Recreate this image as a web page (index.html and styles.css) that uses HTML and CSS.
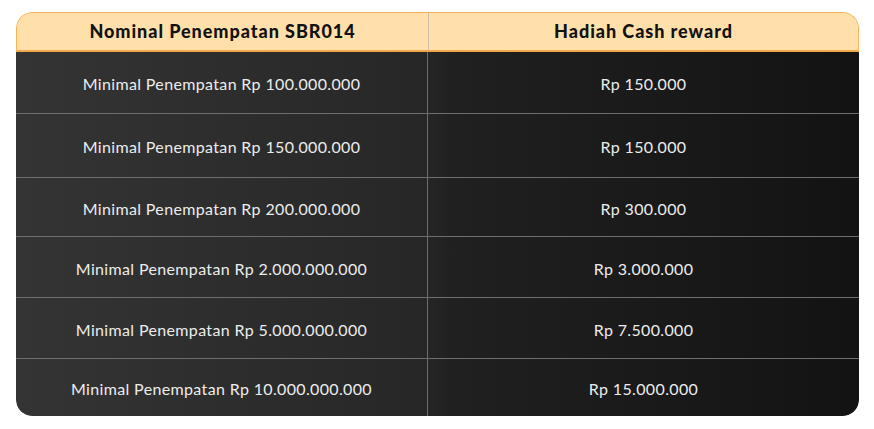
FILE: index.html
```html
<!DOCTYPE html>
<html lang="id">
<head>
<meta charset="utf-8">
<title>SBR014</title>
<link rel="stylesheet" href="styles.css">
</head>
<body>
<div class="table">
  <div class="head">
    <div class="hcell">Nominal Penempatan SBR014</div>
    <div class="hcell">Hadiah Cash reward</div>
  </div>
  <div class="body">
    <div class="row r1"><div class="cell">Minimal Penempatan Rp 100.000.000</div><div class="cell">Rp 150.000</div></div>
    <div class="row r2"><div class="cell">Minimal Penempatan Rp 150.000.000</div><div class="cell">Rp 150.000</div></div>
    <div class="row r3"><div class="cell">Minimal Penempatan Rp 200.000.000</div><div class="cell">Rp 300.000</div></div>
    <div class="row r4"><div class="cell">Minimal Penempatan Rp 2.000.000.000</div><div class="cell">Rp 3.000.000</div></div>
    <div class="row r5"><div class="cell">Minimal Penempatan Rp 5.000.000.000</div><div class="cell">Rp 7.500.000</div></div>
    <div class="row r6"><div class="cell">Minimal Penempatan Rp 10.000.000.000</div><div class="cell">Rp 15.000.000</div></div>
  </div>
</div>
</body>
</html>
```
FILE: styles.css
```css
* { box-sizing: border-box; }
html, body { margin: 0; padding: 0; background: #ffffff; }
body {
  padding: 12px 15px 0 16px;
  font-family: "Lato", "Liberation Sans", sans-serif;
}
.table {
  width: 843px;
  border-radius: 16px;
  overflow: hidden;
}
.head {
  display: grid;
  grid-template-columns: 412px 1fr;
  height: 40px;
  background: #ffe0aa;
  border: 1px solid #f6b55a;
  border-bottom: 2px solid #f2a84a;
  border-radius: 16px 16px 0 0;
}
.hcell {
  display: flex;
  align-items: center;
  justify-content: center;
  font-weight: 900;
  font-size: 18px;
  letter-spacing: 0.95px;
  color: #121212;
  padding-bottom: 1px;
}
.hcell:first-child { border-right: 1px solid #cdbfa8; }
.body {
  background: linear-gradient(90deg, #343434 0%, #272727 48%, #202020 52%, #131313 100%);
  border-radius: 0 0 16px 16px;
}
.row {
  display: grid;
  grid-template-columns: 412px 1fr;
  border-bottom: 1px solid #6e6e6e;
}
.row:last-child { border-bottom: none; }
.r1 { height: 62px; }
.r2 { height: 64px; }
.r3 { height: 59px; }
.r4 { height: 61px; }
.r5 { height: 61px; }
.r6 { height: 57px; }
.cell {
  display: flex;
  align-items: center;
  justify-content: center;
  font-size: 16px;
  letter-spacing: 0.35px;
  color: #ececec;
  padding-top: 2px;
}
.cell:first-child { border-right: 1px solid #6e6e6e; }
```
